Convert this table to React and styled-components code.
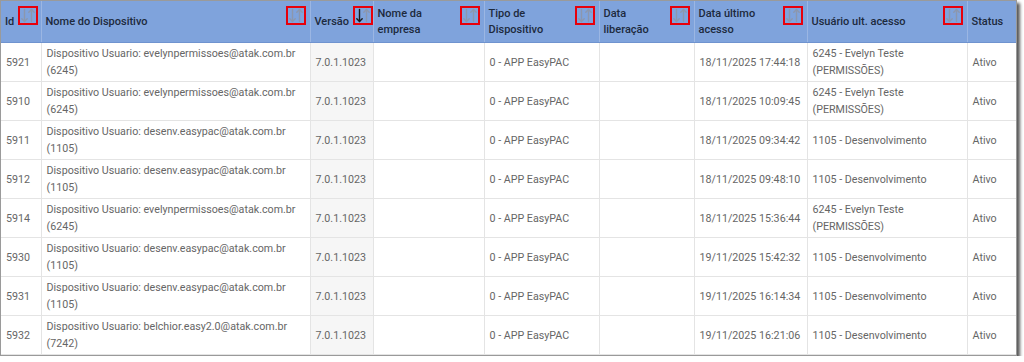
import React from 'react'
import styled, { createGlobalStyle } from 'styled-components'

const GlobalStyle = createGlobalStyle`
  body {
    margin: 0;
    background: #ffffff;
    font-family: Roboto, "Liberation Sans", Arial, sans-serif;
  }
`

const Frame = styled.div`
  width: 1015px;
  border: 1px solid #9a9a9a;
  box-shadow: 3px 3px 3px rgba(0, 0, 0, 0.65);
  background: #fff;
`

const Table = styled.table`
  width: 1015px;
  table-layout: fixed;
  border-collapse: collapse;
  font-size: 10.7px;
  line-height: 17px;
`

const HeadCell = styled.th`
  background: #7fa3dc;
  color: #1d2a3d;
  font-size: 11px;
  line-height: 16px;
  font-weight: 500;
  text-align: left;
  vertical-align: top;
  height: 41px;
  padding: 0;
  border-right: 1px solid #9bb6e3;
  border-bottom: 1px solid #6f93cf;
  &:last-child {
    border-right: none;
  }
`

const HeadInner = styled.div`
  display: flex;
  justify-content: space-between;
  gap: 4px;
  height: 41px;
  padding: 0 4px;
  box-sizing: border-box;
`

const HeadTitle = styled.span`
  align-self: center;
`

const SortBox = styled.span`
  flex: none;
  margin-top: 5px;
  width: 20px;
  height: 19px;
  box-sizing: border-box;
  border: 2px solid #e8000b;
  display: flex;
  align-items: center;
  justify-content: center;
`

const Cell = styled.td`
  color: #666666;
  padding: 0 5px;
  height: 38px;
  vertical-align: middle;
  border-right: 1px solid #e4e4e4;
  border-bottom: 1px solid #e4e4e4;
  background: ${p => (p.$sorted ? '#f6f6f6' : '#ffffff')};
  &:last-child {
    border-right: none;
  }
`

const SortIcon = ({ active }) => (
  <svg width="16" height="15" viewBox="0 0 16 15">
    <g fill="none" strokeWidth="1.4" strokeLinecap="round" strokeLinejoin="round">
      <g stroke={active ? '#1b1b1b' : '#8c97ad'}>
        <path d="M4.5 1.5v12" />
        <path d="M1.8 10.7l2.7 2.8 2.7-2.8" />
      </g>
      <g stroke="#8c97ad">
        <path d="M11.5 13.5v-12" />
        <path d="M8.8 4.3l2.7-2.8 2.7 2.8" />
      </g>
    </g>
  </svg>
)

const columns = [
  { key: 'id', title: 'Id', width: 40, sort: true },
  { key: 'nome', title: 'Nome do Dispositivo', width: 269, sort: true },
  { key: 'versao', title: 'Versão', width: 63, sort: true, active: true },
  { key: 'empresa', title: <>Nome da<br />empresa</>, width: 111, sort: true },
  { key: 'tipo', title: <>Tipo de<br />Dispositivo</>, width: 115, sort: true },
  { key: 'liberacao', title: <>Data<br />liberação</>, width: 95, sort: true },
  { key: 'ultimo', title: <>Data último<br />acesso</>, width: 113, sort: true },
  { key: 'usuario', title: 'Usuário ult. acesso', width: 160, sort: true },
  { key: 'status', title: 'Status', width: 49, sort: false },
]

const evelyn = <>6245 - Evelyn Teste<br />(PERMISSÕES)</>
const desenv = '1105 - Desenvolvimento'

const rows = [
  ['5921', 'evelynpermissoes@atak.com.br', '6245', '18/11/2025 17:44:18', evelyn],
  ['5910', 'evelynpermissoes@atak.com.br', '6245', '18/11/2025 10:09:45', evelyn],
  ['5911', 'desenv.easypac@atak.com.br', '1105', '18/11/2025 09:34:42', desenv],
  ['5912', 'desenv.easypac@atak.com.br', '1105', '18/11/2025 09:48:10', desenv],
  ['5914', 'evelynpermissoes@atak.com.br', '6245', '18/11/2025 15:36:44', evelyn],
  ['5930', 'desenv.easypac@atak.com.br', '1105', '19/11/2025 15:42:32', desenv],
  ['5931', 'desenv.easypac@atak.com.br', '1105', '19/11/2025 16:14:34', desenv],
  ['5932', 'belchior.easy2.0@atak.com.br', '7242', '19/11/2025 16:21:06', desenv],
]

const App = () => {
  return (
    <>
      <GlobalStyle />
      <Frame>
        <Table>
          <colgroup>
            {columns.map(c => (
              <col key={c.key} style={{ width: c.width }} />
            ))}
          </colgroup>
          <thead>
            <tr>
              {columns.map(c => (
                <HeadCell key={c.key}>
                  <HeadInner>
                    <HeadTitle>{c.title}</HeadTitle>
                    {c.sort && (
                      <SortBox>
                        <SortIcon active={c.active} />
                      </SortBox>
                    )}
                  </HeadInner>
                </HeadCell>
              ))}
            </tr>
          </thead>
          <tbody>
            {rows.map(([id, email, code, date, user]) => (
              <tr key={id}>
                <Cell>{id}</Cell>
                <Cell>
                  Dispositivo Usuario: {email}
                  <br />({code})
                </Cell>
                <Cell $sorted>7.0.1.1023</Cell>
                <Cell />
                <Cell>0 - APP EasyPAC</Cell>
                <Cell />
                <Cell>{date}</Cell>
                <Cell>{user}</Cell>
                <Cell>Ativo</Cell>
              </tr>
            ))}
          </tbody>
        </Table>
      </Frame>
    </>
  )
}

export default App
